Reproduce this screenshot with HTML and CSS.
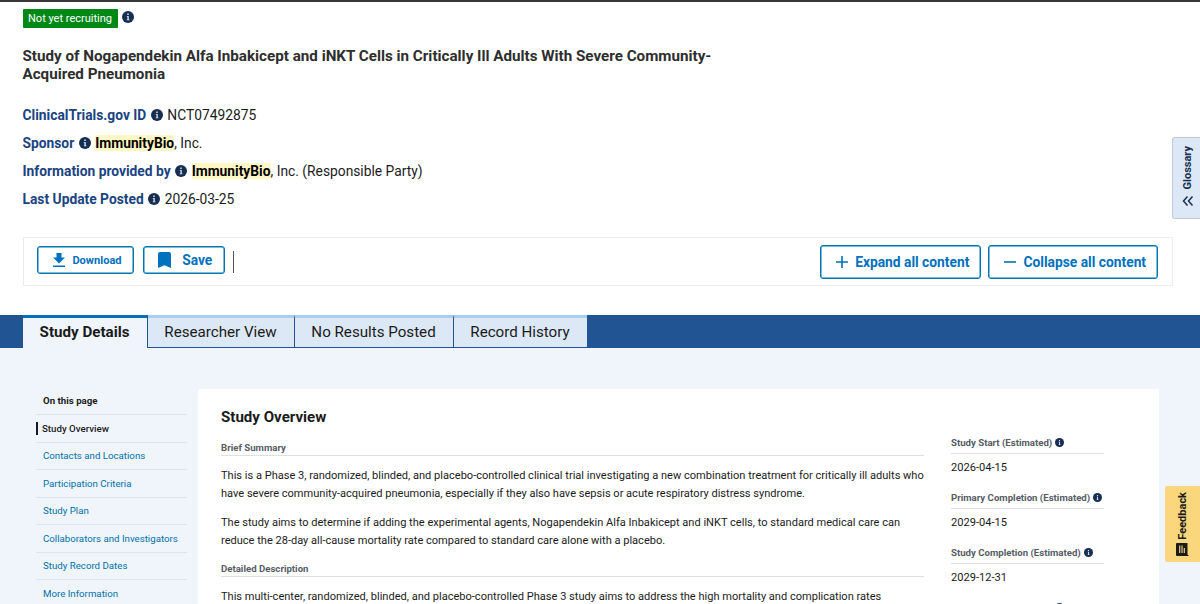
FILE: index.html
```html
<!DOCTYPE html>
<html lang="en">
<head>
    <meta charset="UTF-8">
    <meta name="viewport" content="width=device-width, initial-scale=1.0">
    <title>Study Details | ClinicalTrials.gov</title>
    <link rel="stylesheet" href="styles.css">
</head>
<body>

<!-- shared icon -->
<svg class="sprite" width="0" height="0">
    <symbol id="info" viewBox="0 0 24 24">
        <circle cx="12" cy="12" r="12" fill="#162e51"/>
        <path d="M10.500 5h3v2.800h-3zM9.500 10h4v7H15v1.600H9.500V17h1.300v-5.400H9.500z" fill="#dce4ef"/>
    </symbol>
</svg>

<header class="study-header">
    <div class="status">
        <span class="badge">Not yet recruiting</span>
        <svg class="info"><use href="#info"/></svg>
    </div>

    <h1>Study of Nogapendekin Alfa Inbakicept and iNKT Cells in Critically Ill Adults With Severe Community-Acquired Pneumonia</h1>

    <div class="field"><b>ClinicalTrials.gov ID</b><svg class="info"><use href="#info"/></svg><span>NCT07492875</span></div>
    <div class="field"><b>Sponsor</b><svg class="info"><use href="#info"/></svg><span><mark>ImmunityBio</mark>, Inc.</span></div>
    <div class="field"><b>Information provided by</b><svg class="info"><use href="#info"/></svg><span><mark>ImmunityBio</mark>, Inc. (Responsible Party)</span></div>
    <div class="field"><b>Last Update Posted</b><svg class="info"><use href="#info"/></svg><span>2026-03-25</span></div>

    <div class="toolbar">
        <button class="btn download">
            <svg width="14" height="16" viewBox="0 0 14 16"><path d="M4.500 1h5v4.500H13L7 11.500 1 5.500h3.500zM1 13.500h12V15H1z" fill="#0071bc"/></svg>
            Download
        </button>
        <button class="btn save">
            <svg width="13" height="16" viewBox="0 0 13 16"><path d="M2 0h9q2 0 2 2v14l-6.500-2.800L0 16V2q0-2 2-2z" fill="#0071bc"/></svg>
            Save
        </button>
        <span class="divider"></span>
        <button class="btn expand">
            <svg width="14" height="14" viewBox="0 0 14 14"><path d="M7 1v12M1 7h12" stroke="#0071bc" stroke-width="1.600"/></svg>
            Expand all content
        </button>
        <button class="btn collapse">
            <svg width="14" height="14" viewBox="0 0 14 14"><path d="M1 7h12" stroke="#0071bc" stroke-width="1.600"/></svg>
            Collapse all content
        </button>
    </div>
</header>

<nav class="tabs">
    <a class="tab active">Study Details</a>
    <a class="tab researcher">Researcher View</a>
    <a class="tab results">No Results Posted</a>
    <a class="tab history">Record History</a>
</nav>

<main>
    <aside class="side-nav">
        <h2>On this page</h2>
        <a class="current"><span>Study Overview</span></a>
        <a>Contacts and Locations</a>
        <a>Participation Criteria</a>
        <a>Study Plan</a>
        <a>Collaborators and Investigators</a>
        <a>Study Record Dates</a>
        <a>More Information</a>
    </aside>

    <div class="panel">
        <section class="overview">
            <h2>Study Overview</h2>
            <h3>Brief Summary</h3>
            <p>This is a Phase 3, randomized, blinded, and placebo-controlled clinical trial investigating a new combination treatment for critically ill adults who<br>have severe community-acquired pneumonia, especially if they also have sepsis or acute respiratory distress syndrome.</p>
            <p>The study aims to determine if adding the experimental agents, Nogapendekin Alfa Inbakicept and iNKT cells, to standard medical care can<br>reduce the 28-day all-cause mortality rate compared to standard care alone with a placebo.</p>
            <h3>Detailed Description</h3>
            <p>This multi-center, randomized, blinded, and placebo-controlled Phase 3 study aims to address the high mortality and complication rates</p>
        </section>

        <section class="dates">
            <h3>Study Start (Estimated)<svg class="info"><use href="#info"/></svg></h3>
            <p>2026-04-15</p>
            <h3>Primary Completion (Estimated)<svg class="info"><use href="#info"/></svg></h3>
            <p>2029-04-15</p>
            <h3>Study Completion (Estimated)<svg class="info"><use href="#info"/></svg></h3>
            <p>2029-12-31</p>
            <h3 class="next"><svg class="info"><use href="#info"/></svg></h3>
        </section>
    </div>
</main>

<button class="side-tab glossary">
    <svg width="12" height="12" viewBox="0 0 12 12"><path d="M5.500 1.500L1.500 6l4 4.500M10.500 1.500L6.500 6l4 4.500" fill="none" stroke="#162e51" stroke-width="1.500"/></svg>
    <span>Glossary</span>
</button>
<button class="side-tab feedback">
    <svg width="13" height="14" viewBox="0 0 13 14"><path d="M1 1h10.500v11.500L13 14H1q-1 0-1-1V2q0-1 1-1z" fill="#1b1b1b"/><path d="M3.700 11V3.500M6 11V3.500M8.300 11V6" stroke="#fad67c" stroke-width="1.100"/></svg>
    <span>Feedback</span>
</button>

</body>
</html>
```
FILE: styles.css
```css
* {
    box-sizing: border-box;
}

body {
    margin: 0;
    height: 604px;
    overflow: hidden;
    font-family: Roboto, "Liberation Sans", sans-serif;
    color: #1b1b1b;
    background-color: white;
    border-top: 2px solid #3a383b;
}

h1, h2, h3, p {
    margin: 0;
}

button {
    font-family: inherit;
    padding: 0;
}

.sprite {
    position: absolute;
}

.info {
    width: 12px;
    height: 12px;
    flex: none;
}

/* header */
.study-header {
    height: 313px;
    padding: 7px 27.5px 0 22.5px;
}

.status {
    display: flex;
    gap: 4px;
    height: 19px;
}

.status .info {
    margin-top: 2px;
}

.badge {
    width: 95px;
    height: 19px;
    line-height: 19px;
    text-align: center;
    font-size: 11px;
    color: white;
    background-color: #008817;
    border-radius: 1px;
}

h1 {
    width: 700px;
    margin: 20px 0 18px;
    font-size: 15.2px;
    line-height: 17.7px;
    color: #2e2e2e;
}

.field {
    display: flex;
    align-items: center;
    height: 27.8px;
    font-size: 13.8px;
}

.field b {
    color: #1a4480;
}

.field .info {
    margin: 0 4.5px 0 4.5px;
}

mark {
    font-weight: bold;
    color: black;
    background-color: #fff8c5;
}

.toolbar {
    display: flex;
    height: 49px;
    margin-top: 24.6px;
    padding: 7px 14px 7px 13.5px;
    border: 1px solid #ececec;
}

.btn {
    display: flex;
    align-items: center;
    justify-content: center;
    gap: 6px;
    height: 28px;
    font-size: 13.8px;
    font-weight: bold;
    color: #0071bc;
    background-color: white;
    border: 1px solid #0076b0;
    box-shadow: inset 0 0 0 0.5px #0076b0;
    border-radius: 3px;
}

.download {
    width: 97px;
    margin: 1px 8.500px 0 0;
    padding-left: 3px;
    font-size: 11.1px;
}

.save {
    width: 82.5px;
    margin-top: 1px;
    padding-left: 3px;
    gap: 11px;
}

.divider {
    width: 1px;
    height: 22px;
    margin: 6px auto 0 8px;
    background-color: #555;
}

.expand, .collapse {
    height: 34px;
    padding: 0 0 1px 4px;
}

.expand {
    width: 161.5px;
    margin-right: 7px;
}

.collapse {
    width: 169.5px;
}

/* tabs */
.tabs {
    display: flex;
    height: 33px;
    padding-left: 23px;
    background-color: #205493;
}

.tab {
    height: 33px;
    padding: 3px 1px 0 0;
    line-height: 22px;
    font-size: 15.15px;
    text-align: center;
    background-color: #dce8f5;
    border-top: 3px solid #a9cdec;
    border-bottom: 1px solid #205493;
    border-right: 1px solid #205493;
}

.active {
    width: 125px;
    font-weight: bold;
    background-color: #f0f5fc;
    border-top-color: #0071bc;
    border-bottom: none;
}

.researcher {
    width: 147px;
}

.results {
    width: 159px;
}

.history {
    width: 133px;
    border-right: none;
}

/* content */
main {
    display: flex;
    height: 256px;
    padding: 41px 41px 0 36px;
    background-color: #f0f5fc;
}

.side-nav {
    width: 151px;
    margin-right: 11px;
}

.side-nav h2, .side-nav a {
    display: flex;
    align-items: center;
    height: 27.5px;
    padding-left: 7px;
    font-size: 9.7px;
    color: #0071a8;
    border-bottom: 1px solid #dfe4ea;
}

.side-nav h2 {
    height: 26px;
    padding-bottom: 2px;
    color: #1b1b1b;
}

.side-nav .current {
    padding-left: 0;
    font-weight: 500;
    color: #1b1b1b;
}

.current span {
    padding-left: 4px;
    line-height: 13px;
    border-left: 2px solid #1b1b1b;
}

.panel {
    display: flex;
    flex: 1;
    padding-left: 23px;
    background-color: white;
}

.overview {
    width: 703px;
    margin-right: 27px;
    padding-top: 19px;
    white-space: nowrap;
}

.overview h2 {
    height: 32px;
    line-height: 18px;
    font-size: 15.1px;
}

h3 {
    height: 16px;
    line-height: 15px;
    font-size: 9.65px;
    color: #565c65;
    border-bottom: 1px solid #e0e0e0;
}

.overview p {
    margin: 11px 0;
    font-size: 11.05px;
    line-height: 18px;
}

.dates {
    width: 153px;
    padding-top: 46px;
}

.dates h3 {
    display: flex;
    align-items: center;
    height: 19px;
    padding-bottom: 3px;
}

.dates .info {
    width: 9px;
    height: 9px;
    margin-left: 3px;
}

.dates p {
    height: 36px;
    padding-top: 5px;
    font-size: 11.1px;
    line-height: 18px;
}

.dates .next {
    padding-left: 101px;
}

/* tabs stuck to the right edge */
.side-tab {
    position: absolute;
    right: 0;
    display: flex;
    flex-direction: column-reverse;
    align-items: center;
    font-size: 11px;
    font-weight: bold;
    border: none;
}

.side-tab span {
    writing-mode: vertical-rl;
    transform: rotate(180deg);
}

.glossary {
    top: 137px;
    width: 28px;
    height: 82px;
    padding: 8px 0 0 2px;
    justify-content: flex-end;
    gap: 6px;
    color: #162e51;
    background-color: #dce8f5;
    border: 1px solid #c3cbd6;
    border-right: none;
    border-radius: 3px 0 0 3px;
}

.feedback {
    top: 486px;
    width: 35px;
    height: 76px;
    padding-top: 6px;
    justify-content: flex-end;
    gap: 2px;
    color: #1b1b1b;
    background-color: #fad67c;
    border-radius: 2px 0 0 2px;
}
```
